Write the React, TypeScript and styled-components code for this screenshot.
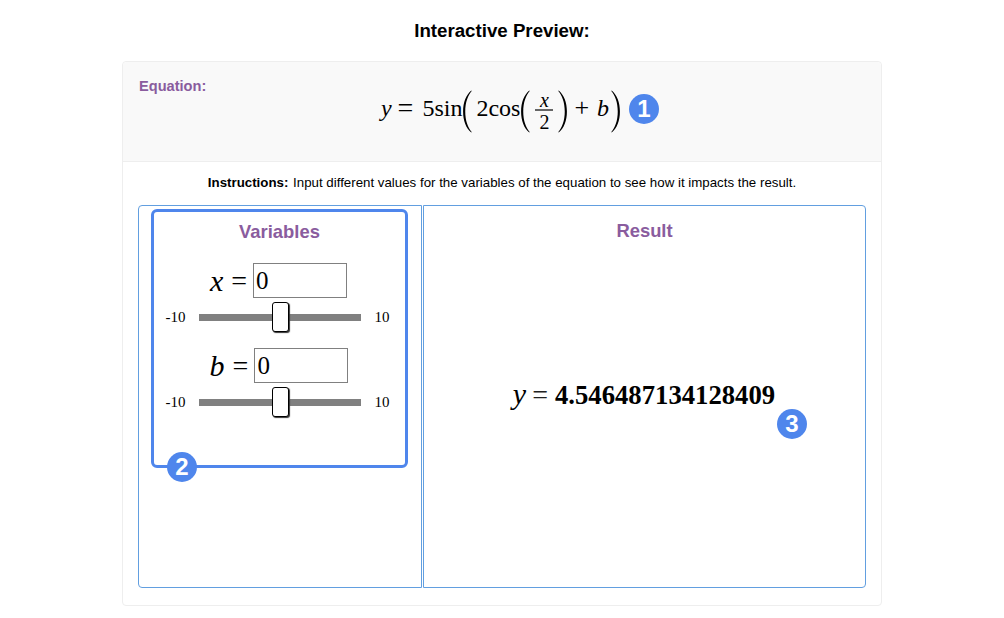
import React from "react";
import styled, { createGlobalStyle } from "styled-components";

const Global = createGlobalStyle`
  html, body { margin: 0; padding: 0; background: #fff; }
  body { font-family: "Liberation Sans", Arial, sans-serif; color: #000; overflow: hidden; }
`;
const Page = styled.div`
  width: 1004px; height: 618px; box-sizing: border-box; padding-top: 20px; overflow: hidden;
  display: flex; flex-direction: column; align-items: center;
`;
const Title = styled.h1`
  margin: 0 0 20px; font-size: 18.7px; line-height: 21px; font-weight: 700; text-align: center;
`;
const Card = styled.section`
  width: 760px; height: 545px; box-sizing: border-box; border: 1px solid #eeeeee; border-radius: 4px;
  display: flex; flex-direction: column;
`;
const Header = styled.header`
  height: 100px; box-sizing: border-box; background: #f9f9f9; border-bottom: 1px solid #eeeeee;
  border-radius: 4px 4px 0 0; padding: 16px 16px 0; position: relative; flex: none;
  display: flex; justify-content: center;
`;
const EqLabel = styled.span`
  position: absolute; left: 16px; top: 16px; font-size: 14.6px; line-height: 17px; font-weight: 700; color: #8a5c9e;
`;
const Formula = styled.div`
  display: flex; align-items: center; height: 60px; margin-left: -2px; flex: none;
  font-family: "Liberation Serif", "Times New Roman", serif; font-size: 24px; color: #000;
`;
const MI = styled.i`font-style: italic;`;
const Op = styled.span<{ $l?: number; $r?: number; $size?: number }>`
  margin-left: ${(p) => p.$l ?? 0}px; margin-right: ${(p) => p.$r ?? 0}px;
  font-size: ${(p) => p.$size ?? 24}px;
`;
const Frac = styled.span`
  display: inline-flex; flex-direction: column; align-items: center; width: 18px; margin: 7px 5px 0;
  font-size: 20px;
`;
const FracTop = styled.i`
  border-bottom: 2px solid #666; width: 100%; height: 20px; text-align: center; line-height: 23px;
`;
const FracBottom = styled.span`line-height: 23px;`;
const ParenSvg = styled.svg<{ $flip?: boolean }>`
  flex: none; display: block; margin-top: 6px;
  transform: ${(p) => (p.$flip ? "scaleX(-1)" : "none")};
`;
const Paren = ({ flip }: { flip?: boolean }) => (
  <ParenSvg $flip={flip} width={10} height={43} viewBox="0 0 10 44">
    <path d="M9.4 0.4 C4 5 1 12.500 1 22 C1 31.500 4 39 9.4 43.600 L9.800 43 C6 38.500 3.200 31.500 3.200 22 C3.200 12.500 6 5.500 9.800 1 Z" fill="#000" />
  </ParenSvg>
);
const Instructions = styled.p`
  margin: 0; padding-top: 13px; height: 31px; box-sizing: border-box; flex: none; text-align: center;
  font-size: 13.3px; line-height: 15px; white-space: nowrap;
`;
const Strong = styled.b`font-weight: 700; margin-right: 1px;`;
const Panels = styled.div`
  flex: 1; display: flex; gap: 1px; padding: 12px 15px 17px;
`;
const LeftPanel = styled.div`
  width: 284px; box-sizing: border-box; border: 1px solid #629fe0; border-radius: 4px 0 0 4px; padding: 3px 13px 0 12px; flex: none;
`;
const RightPanel = styled.div`
  flex: 1; box-sizing: border-box; border: 1px solid #629fe0; border-radius: 0 4px 4px 0; position: relative;
  display: flex; flex-direction: column; align-items: center; padding-top: 14px;
`;
const Highlight = styled.div`
  height: 259px; box-sizing: border-box; border: 3px solid #4f86ec; border-radius: 6px; position: relative;
  display: flex; flex-direction: column; align-items: center; padding-top: 9px;
`;
const PanelTitle = styled.h2`
  margin: 0; font-size: 18.4px; line-height: 21px; font-weight: 700; color: #8a5c9e; text-align: center;
`;
const VarRow = styled.div<{ $first?: boolean }>`
  display: flex; align-items: center; height: 35px; margin-top: ${(p) => (p.$first ? 21 : 14)}px;
  margin-right: ${(p) => (p.$first ? 2 : 1)}px;
  font-family: "Liberation Serif", "Times New Roman", serif; font-size: 30px;
`;
const VarEq = styled.span`margin: 0 6px 0 8px; font-size: 28px;`;
const NumInput = styled.input`
  width: 94px; height: 35px; box-sizing: border-box; border: 1px solid #808080; padding: 0 2px; margin: 0; border-radius: 0;
  font-family: "Liberation Serif", "Times New Roman", serif; font-size: 25px; color: #000; background: #fff; outline: none;
`;
const SliderRow = styled.div`
  display: flex; align-items: center; height: 34px; margin-top: 2px; margin-left: -3px;
  font-family: "Liberation Serif", "Times New Roman", serif; font-size: 15px;
`;
const MinLabel = styled.span`width: 33px; text-align: left;`;
const MaxLabel = styled.span`width: 16px; margin-left: 14px;`;
const Range = styled.input`
  -webkit-appearance: none; appearance: none; width: 162px; height: 30px; margin: 0; background: transparent;
  &::-webkit-slider-runnable-track { height: 7px; background: #808080; }
  &::-webkit-slider-thumb {
    -webkit-appearance: none; appearance: none; width: 17px; height: 30px; margin-top: -11.5px; box-sizing: border-box;
    background: #fff; border: 1px solid #000; border-radius: 3px; box-shadow: 1px 1px 1px #333;
    transform: translateX(1px);
  }
`;
const Result = styled.div`
  font-family: "Liberation Serif", "Times New Roman", serif; font-size: 26.7px; font-weight: 700; line-height: 32px;
  display: flex; align-items: baseline; margin-top: 137px; margin-left: -1px; white-space: nowrap;
`;
const ResultVar = styled.i`font-weight: 400; font-size: 30px;`;
const ResultEq = styled.span`font-weight: 400; font-size: 28px; margin: 0 7px 0 6px; color: #222;`;
const Badge = styled.span`
  width: 30px; height: 30px; border-radius: 50%; background: #4f86ec; color: #fff; flex: none;
  display: flex; align-items: center; justify-content: center;
  font-family: "Liberation Sans", Arial, sans-serif; font-weight: 700; font-size: 24px; line-height: 30px;
`;
const Badge1 = styled(Badge)`position: absolute; left: 506px; top: 32px;`;
const Badge2 = styled(Badge)`position: absolute; left: 13px; bottom: -17px;`;
const Badge3 = styled(Badge)`position: absolute; left: 353px; top: 203px;`;

const Slider = () => (
  <SliderRow>
    <MinLabel>-10</MinLabel>
    <Range type="range" min={-10} max={10} defaultValue={0} />
    <MaxLabel>10</MaxLabel>
  </SliderRow>
);

export default function App() {
  return (
    <Page>
      <Global />
      <Title>Interactive Preview:</Title>
      <Card>
        <Header>
          <EqLabel>Equation:</EqLabel>
          <Formula>
            <MI>y</MI>
            <Op $l={6} $r={9} $size={28}>=</Op>
            <span>5sin</span>
            <Paren />
            <Op $l={4}>2cos</Op>
            <Paren />
            <Frac>
              <FracTop>x</FracTop>
              <FracBottom>2</FracBottom>
            </Frac>
            <Paren flip />
            <Op $l={6} $r={8} $size={26}>+</Op>
            <MI>b</MI>
            <Op $l={2} />
            <Paren flip />
          </Formula>
          <Badge1>1</Badge1>
        </Header>
        <Instructions>
          <Strong>Instructions:</Strong> Input different values for the variables of the equation to see how it impacts the result.
        </Instructions>
        <Panels>
          <LeftPanel>
            <Highlight>
              <PanelTitle>Variables</PanelTitle>
              <VarRow $first>
                <MI>x</MI>
                <VarEq>=</VarEq>
                <NumInput defaultValue="0" />
              </VarRow>
              <Slider />
              <VarRow>
                <MI>b</MI>
                <VarEq>=</VarEq>
                <NumInput defaultValue="0" />
              </VarRow>
              <Slider />
              <Badge2>2</Badge2>
            </Highlight>
          </LeftPanel>
          <RightPanel>
            <PanelTitle>Result</PanelTitle>
            <Result>
              <ResultVar>y</ResultVar>
              <ResultEq>=</ResultEq>
              4.546487134128409
            </Result>
            <Badge3>3</Badge3>
          </RightPanel>
        </Panels>
      </Card>
    </Page>
  );
}
